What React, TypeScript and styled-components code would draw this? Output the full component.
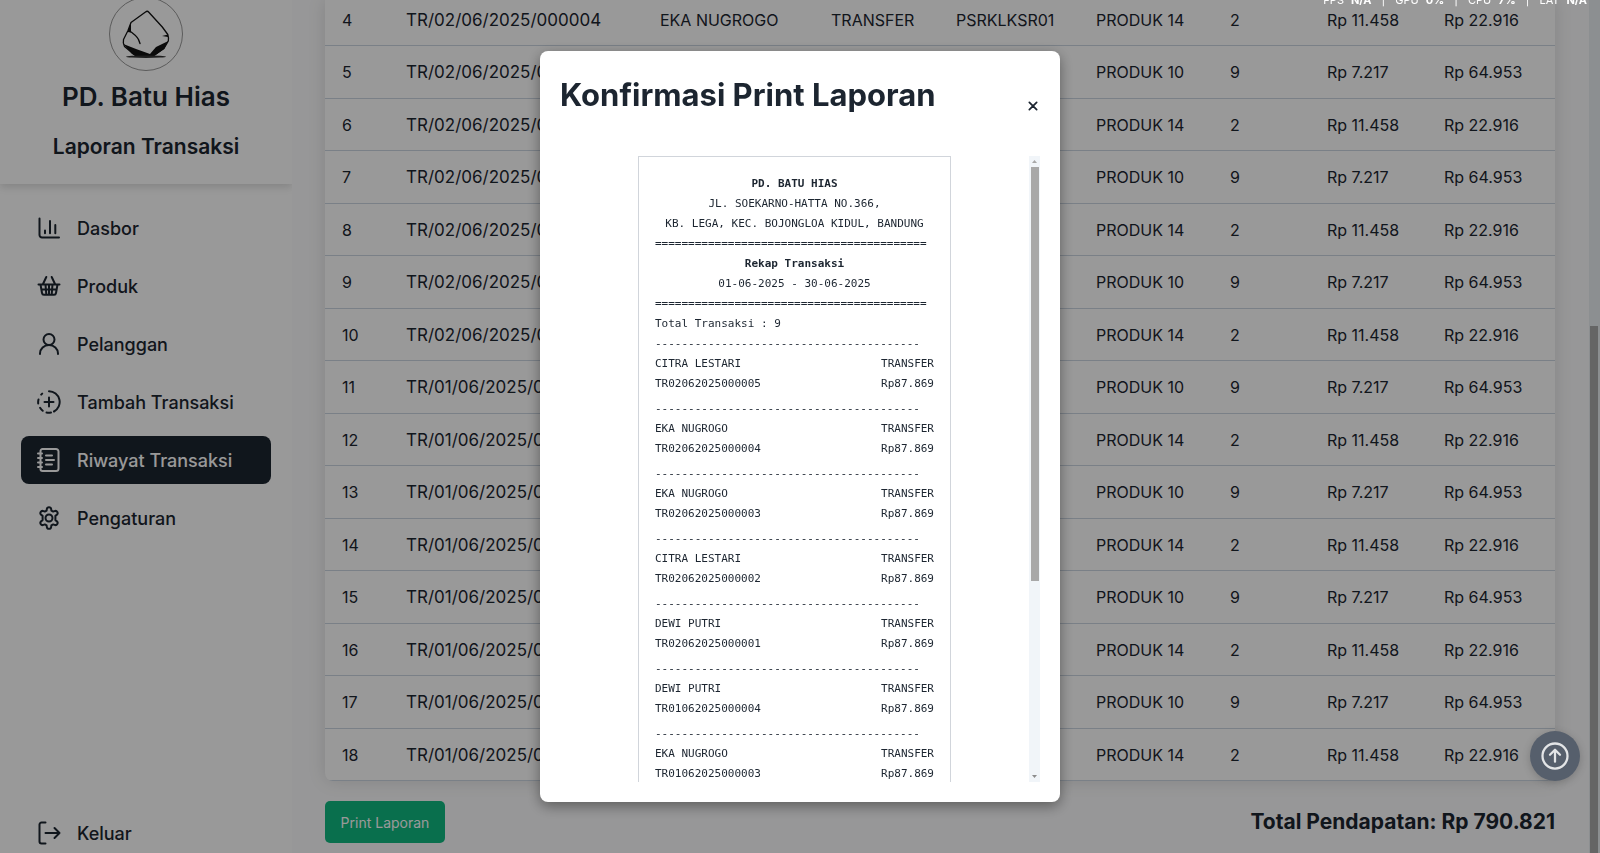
import React from 'react';
import styled, { createGlobalStyle } from 'styled-components';

const FONT = '"Inter", "Liberation Sans", sans-serif';
const MONO = '"DejaVu Sans Mono", "Liberation Mono", monospace';
const INK = '#1c2530';

const GlobalStyle = createGlobalStyle`
  * { box-sizing: border-box; }
  html, body { margin: 0; overflow: hidden; background: #fff; }
  body { font-family: ${FONT}; font-size: 16px; color: ${INK}; }
  h1, h2, p { margin: 0; }
`;

const Page = styled.div`
  display: flex;
  height: 100vh;
  overflow: hidden;
  position: relative;
`;

const Sidebar = styled.aside`
  display: flex;
  flex: none;
  flex-direction: column;
  width: 292px;
  overflow: hidden;
  background: #fff;
`;

const Brand = styled.header`
  display: flex;
  flex: none;
  flex-direction: column;
  align-items: center;
  height: 184px;
  box-shadow: 0 3px 8px rgba(0, 0, 0, 0.14);
`;

const LogoBox = styled.div`
  display: flex;
  align-items: flex-end;
  height: 71px;
`;

const BrandName = styled.h2`
  margin-top: 8px;
  font-size: 26px;
  line-height: 36px;
  font-weight: 600;
`;

const PageName = styled.p`
  margin-top: 16px;
  font-size: 21px;
  line-height: 32px;
  font-weight: 600;
`;

const Nav = styled.nav`
  display: flex;
  flex: 1;
  flex-direction: column;
  gap: 10px;
  padding: 20px 21px 0;
`;

const NavItem = styled.a<{ $active?: boolean; $last?: boolean }>`
  display: flex;
  flex: none;
  align-items: center;
  gap: 16px;
  height: 48px;
  padding: 0 16px;
  margin-top: ${(p) => (p.$last ? 'auto' : '0')};
  margin-bottom: ${(p) => (p.$last ? '-4px' : '0')};
  border-radius: 8px;
  font-size: 18px;
  font-weight: 500;
  white-space: nowrap;
  text-decoration: none;
  color: ${(p) => (p.$active ? '#fff' : INK)};
  background: ${(p) => (p.$active ? INK : 'transparent')};
`;

const Main = styled.main`
  flex: 1;
  min-width: 0;
  padding: 0 45px 0 33px;
  background: #fcfcfd;
`;

const TableCard = styled.div`
  height: 781px;
  overflow: hidden;
  display: flex;
  align-items: flex-end;
  border-radius: 0 0 8px 8px;
  background: #fff;
  box-shadow: 0 0 18px rgba(0, 0, 0, 0.13);
`;

const Table = styled.table`
  width: 100%;
  table-layout: fixed;
  border-collapse: separate;
  border-spacing: 0;
`;

const Cell = styled.td<{ $code?: boolean }>`
  padding: 0 0 0 17px;
  border-bottom: 1px solid #cbd5e1;
  font-size: ${(p) => (p.$code ? '17px' : '16px')};
  line-height: 24px;
  white-space: nowrap;
`;

const TableRow = styled.tr`
  height: 52px;

  &:nth-child(even) {
    height: 53px;
  }
`;

const Footer = styled.div`
  display: flex;
  justify-content: space-between;
  align-items: center;
  margin-top: 20px;
`;

const PrintButton = styled.button`
  height: 42px;
  width: 120px;
  padding: 0;
  border: 0;
  border-radius: 5px;
  background: #10b981;
  color: #fff;
  font: 400 14px ${FONT};
`;

const Total = styled.p`
  font-size: 21px;
  line-height: 32px;
  font-weight: 700;
`;

const Overlay = styled.div`
  position: fixed;
  inset: 0;
  display: flex;
  align-items: center;
  justify-content: center;
  background: rgba(0, 0, 0, 0.4);
`;

const Dialog = styled.section`
  display: flex;
  flex-direction: column;
  width: 520px;
  max-height: 88vh;
  padding: 20px;
  border-radius: 8px;
  background: #fff;
  box-shadow: 0 4px 14px rgba(0, 0, 0, 0.4);
`;

const DialogHead = styled.header`
  display: flex;
  flex: none;
  justify-content: space-between;
  height: 85px;
`;

const DialogTitle = styled.h1`
  font-size: 31px;
  line-height: 48px;
  font-weight: 700;
`;

const CloseButton = styled.button`
  width: 32px;
  height: 32px;
  margin: 20px -9px 0 0;
  padding: 0;
  border: 0;
  background: transparent;
  color: ${INK};
`;

const DialogBody = styled.div`
  display: flex;
  min-height: 0;
  overflow: hidden;
`;

const ReceiptArea = styled.div`
  flex: 1;
  display: flex;
  justify-content: center;
  align-items: flex-start;
  overflow: hidden;
`;

const Receipt = styled.article`
  width: 313px;
  padding: 17px 16px;
  border: 1px solid #d1d5db;
  font-family: ${MONO};
  font-size: 11px;
  line-height: 20px;
`;

const Line = styled.p<{ $center?: boolean; $bold?: boolean }>`
  text-align: ${(p) => (p.$center ? 'center' : 'left')};
  font-weight: ${(p) => (p.$bold ? 700 : 400)};
  white-space: nowrap;
`;

const Entry = styled.div`
  display: flex;
  flex-direction: column;
  margin-bottom: 5px;
`;

const Pair = styled.p`
  display: flex;
  justify-content: space-between;
`;

const Track = styled.div`
  display: flex;
  flex-direction: column;
  align-items: center;
  flex: none;
  width: 11px;
  background: #f1f5f9;
`;

const Thumb = styled.div`
  flex: none;
  width: 8px;
  height: 414px;
  background: #a8a8a8;
`;

const Arrow = styled.svg`
  display: block;
  flex: none;
`;

const Spacer = styled.div`
  flex: 1;
`;

const PageTrack = styled.div`
  position: absolute;
  top: 0;
  right: 0;
  bottom: 0;
  width: 11px;
  padding: 326px 2px 0 1px;
  background: #e9eef2;
`;

const PageThumb = styled.div`
  height: 100%;
  background: #a8a8a8;
`;

const TopButton = styled.button`
  position: fixed;
  right: 20px;
  bottom: 72px;
  display: flex;
  align-items: center;
  justify-content: center;
  width: 50px;
  height: 50px;
  padding: 0;
  border: 0;
  border-radius: 50%;
  background: #565f6c;
  color: #e3e5e7;
  box-shadow: 0 2px 8px rgba(0, 0, 0, 0.2);
`;

const Stats = styled.div`
  position: fixed;
  top: -8px;
  right: 13px;
  display: flex;
  gap: 10px;
  font-size: 11px;
  line-height: 16px;
  color: #fff;
`;

const Stat = styled.span`
  display: flex;
  gap: 7px;
`;

const Icon = ({ children, size = 24, width = 2 }: { children: React.ReactNode; size?: number; width?: number }) => (
  <svg width={size} height={size} viewBox="0 0 24 24" fill="none" stroke="currentColor" strokeWidth={width} strokeLinecap="round" strokeLinejoin="round" aria-hidden="true">
    {children}
  </svg>
);

const icons = {
  chart: <path d="M2.500 2.500V19a2.500 2.500 0 0 0 2.500 2.500h17M8 14.500v2.800M13 5v12.300M18.300 9v8.300" />,
  basket: <path d="M1.500 10.500h21M3.500 10.500l1.500 8.500c.2 1.200.8 1.700 1.900 1.700h10.200c1.100 0 1.700-.5 1.900-1.700l1.500-8.500M9.300 3 6 10M14.700 3 18 10M8.500 10.500l.8 10M15.500 10.500l-.8 10M12 10.500v10M4.500 15.500h15" />,
  user: <><circle cx="12" cy="7.500" r="5.500" /><path d="M3 22v-.5a9 8.500 0 0 1 18 0v.5" /></>,
  add: <path d="M12 1.200a10.800 10.800 0 0 1 5 20.300M14 22.600a11 11 0 0 1-4.500 0M5.700 20.800a11 11 0 0 1-2.600-3M1.200 13.500a11 11 0 0 1 .3-4M4.200 4.600l1-1M12 7.500v9M7.500 12h9" />,
  book: <path d="M5.500 1h13.500a2.500 2.500 0 0 1 2.500 2.500v17A2.500 2.500 0 0 1 19 23H5.500a2 2 0 0 1-2-2V3a2 2 0 0 1 2-2zM1 5.500h4M1 10h4M1 14.500h4M1 19h4M9 7.500h6M9 12h8M9 16.500h6" />,
  gear: <><circle cx="12" cy="12" r="3.500" /><path d="M9.800 3.200c.4-2.700 4-2.700 4.400 0l.2 1.400 1.800 1 1.300-.5c2.500-1 4.300 2.200 2.200 3.800l-1.300 1v4.200l1.300 1c2.100 1.600.3 4.800-2.200 3.800l-1.300-.5-1.800 1-.2 1.400c-.4 2.700-4 2.700-4.400 0l-.2-1.400-1.800-1-1.300.5c-2.500 1-4.300-2.200-2.200-3.800l1.300-1V9.900l-1.300-1C2.200 7.300 4 4.100 6.500 5.100l1.300.5 1.800-1z" /></>,
  exit: <path d="M8.500 1.500H4.500a2 2 0 0 0-2 2v17a2 2 0 0 0 2 2h4M8.500 12h14M17.500 7l5 5-5 5" />,
};

const menu: { label: string; icon: React.ReactNode; active?: boolean }[] = [
  { label: 'Dasbor', icon: icons.chart },
  { label: 'Produk', icon: icons.basket },
  { label: 'Pelanggan', icon: icons.user },
  { label: 'Tambah Transaksi', icon: icons.add },
  { label: 'Riwayat Transaksi', icon: icons.book, active: true },
  { label: 'Pengaturan', icon: icons.gear },
];

const columns = [64, 254, 171, 125, 140, 134, 97, 117, 128];

const rows = Array.from({ length: 15 }, (_, i) => {
  const no = i + 4;
  const even = no % 2 === 0;
  return [
    String(no),
    `TR/0${no < 11 ? 2 : 1}/06/2025/00000${no < 11 ? Math.max(1, 6 - Math.floor(no / 2)) : Math.max(1, 10 - Math.floor(no / 2))}`,
    'EKA NUGROGO',
    'TRANSFER',
    'PSRKLKSR01',
    even ? 'PRODUK 14' : 'PRODUK 10',
    even ? '2' : '9',
    even ? 'Rp 11.458' : 'Rp 7.217',
    even ? 'Rp 22.916' : 'Rp 64.953',
  ];
});

const entries = [
  ['CITRA LESTARI', 'TR02062025000005'],
  ['EKA NUGROGO', 'TR02062025000004'],
  ['EKA NUGROGO', 'TR02062025000003'],
  ['CITRA LESTARI', 'TR02062025000002'],
  ['DEWI PUTRI', 'TR02062025000001'],
  ['DEWI PUTRI', 'TR01062025000004'],
  ['EKA NUGROGO', 'TR01062025000003'],
];

const stats = [['FPS', 'N/A'], ['GPU', '0%'], ['CPU', '7%'], ['LAT', 'N/A']];

const Logo = () => (
  <svg width="74" height="74" viewBox="0 0 74 74" fill="none" role="img" aria-label="PD. Batu Hias">
    <circle cx="37" cy="37" r="36.500" stroke="#999" />
    <path d="M22 25.500 36.500 15q1.800-1.500 3.300.2L53.300 30l5.500 7.500q1 3 .5 6.500L55 51.500 44 59H27L15.500 49.500q-1.800-3.500-1-7L19 33.500z" stroke="#111" strokeWidth="1.300" strokeLinejoin="round" />
    <path d="M20 33.500q7.500 5 9.500 9l1.500 4" stroke="#111" strokeWidth="1.400" strokeLinecap="round" />
    <path d="M22 25.500l-3.500 9.500 3.500.5zM53 39l6-1.500v2.500zM14.300 47l13.400 5.300L41 57l6-7 12.300-6-4.300 8-9 6.500-5 1.500H29l-6-3z" fill="#111" />
    <ellipse cx="37" cy="59.700" rx="20" ry="1.300" fill="#333" />
  </svg>
);

export default function App() {
  return (
    <>
      <GlobalStyle />
      <Page>
        <Sidebar>
          <Brand>
            <LogoBox><Logo /></LogoBox>
            <BrandName>PD. Batu Hias</BrandName>
            <PageName>Laporan Transaksi</PageName>
          </Brand>
          <Nav>
            {menu.map((m) => (
              <NavItem key={m.label} href="#" $active={m.active}>
                <Icon>{m.icon}</Icon>
                {m.label}
              </NavItem>
            ))}
            <NavItem href="#" $last>
              <Icon>{icons.exit}</Icon>
              Keluar
            </NavItem>
          </Nav>
        </Sidebar>
        <Main>
          <TableCard>
            <Table>
              <colgroup>
                {columns.map((w, i) => <col key={i} style={{ width: `${w / 12.3}%` }} />)}
              </colgroup>
              <tbody>
                {rows.map((r) => (
                  <TableRow key={r[0]}>
                    {r.map((c, i) => <Cell key={i} $code={i === 1}>{c}</Cell>)}
                  </TableRow>
                ))}
              </tbody>
            </Table>
          </TableCard>
          <Footer>
            <PrintButton type="button">Print Laporan</PrintButton>
            <Total>Total Pendapatan: Rp 790.821</Total>
          </Footer>
        </Main>
        <PageTrack><PageThumb /></PageTrack>
      </Page>
      <Overlay>
        <Dialog role="dialog" aria-labelledby="print-title">
          <DialogHead>
            <DialogTitle id="print-title">Konfirmasi Print Laporan</DialogTitle>
            <CloseButton type="button" aria-label="Tutup">
              <Icon size={16} width={2.6}><path d="M6.500 6.500l11 11M17.500 6.500l-11 11" /></Icon>
            </CloseButton>
          </DialogHead>
          <DialogBody>
            <ReceiptArea>
              <Receipt>
                <Line $center $bold>PD. BATU HIAS</Line>
                <Line $center>JL. SOEKARNO-HATTA NO.366,</Line>
                <Line $center>KB. LEGA, KEC. BOJONGLOA KIDUL, BANDUNG</Line>
                <Line>{'='.repeat(41)}</Line>
                <Line $center $bold>Rekap Transaksi</Line>
                <Line $center>01-06-2025 - 30-06-2025</Line>
                <Line>{'='.repeat(41)}</Line>
                <Line>Total Transaksi : 9</Line>
                {entries.map(([name, code]) => (
                  <Entry key={code}>
                    <Line>{'-'.repeat(40)}</Line>
                    <Pair><span>{name}</span><span>TRANSFER</span></Pair>
                    <Pair><span>{code}</span><span>Rp87.869</span></Pair>
                  </Entry>
                ))}
              </Receipt>
            </ReceiptArea>
            <Track>
              <Arrow width="11" height="11" viewBox="0 0 11 11"><path d="M3 7l2.500-3L8 7z" fill="#a8a8a8" /></Arrow>
              <Thumb />
              <Spacer />
              <Arrow width="11" height="11" viewBox="0 0 11 11"><path d="M3 4l2.500 3L8 4z" fill="#8c8c8c" /></Arrow>
            </Track>
          </DialogBody>
        </Dialog>
      </Overlay>
      <TopButton type="button" aria-label="Kembali ke atas">
        <Icon size={30} width={1.8}><circle cx="12" cy="12" r="10" /><path d="M12 16.500v-9M8 11l4-4 4 4" /></Icon>
      </TopButton>
      <Stats>
        {stats.map(([k, v], i) => (
          <React.Fragment key={k}>
            {i > 0 && <span>|</span>}
            <Stat>{k}<b>{v}</b></Stat>
          </React.Fragment>
        ))}
      </Stats>
    </>
  );
}
